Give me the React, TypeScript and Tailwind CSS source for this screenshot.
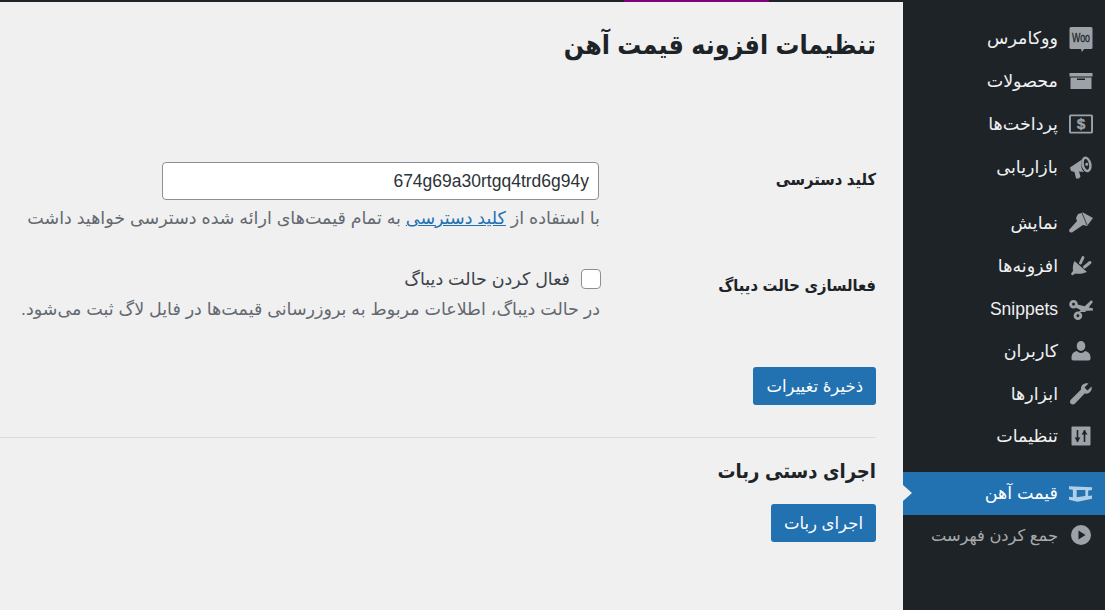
import React from "react";

const I = "#9ca2a7";
const D = "#1d2327";
const icons: Record<string, React.ReactNode> = {
  woo: (
    <svg width="24" height="26" viewBox="0 -2 24 26" className="overflow-visible">
      <path d="M2 0h20a1.500 1.500 0 0 1 1.500 1.500V20.500a1.500 1.500 0 0 1-1.500 1.500h-7l-2 3-1-3H2A1.500 1.500 0 0 1 .5 20.500V1.500A1.500 1.500 0 0 1 2 0z" fill={I} />
      <text x="12" y="15" textAnchor="middle" fontSize="12" fontFamily="Liberation Sans" fill={D} stroke={D} strokeWidth="0.3" textLength="18" lengthAdjust="spacingAndGlyphs">Woo</text>
    </svg>
  ),
  box: (
    <svg width="24" height="24" viewBox="0 0 24 24" fill={I}>
      <path d="M.5 4h23v3.500H.5zM1.500 8.500h21V20h-21z" />
      <rect x="8" y="9.500" width="8" height="1.500" fill={D} />
    </svg>
  ),
  pay: (
    <svg width="25" height="24" viewBox="0 0 25 24">
      <rect x="1" y="3" width="23" height="18" rx="1" fill="none" stroke={I} strokeWidth="2" />
      <text x="12.500" y="17.500" textAnchor="middle" fontSize="16" fontWeight="700" fontFamily="Liberation Sans" fill={I} stroke={I} strokeWidth="0.4">$</text>
    </svg>
  ),
  mega: (
    <svg width="24" height="24" viewBox="0 0 24 24" fill={I}>
      <path d="M1 12.500l12-8c-1.500 3-1 10 2 12.500l-5-.5 1.500 5-1.500 2h-3L5.500 17 2 16z" />
      <g transform="rotate(-12 17 9.500)">
        <ellipse cx="17.500" cy="9.500" rx="5" ry="8" fill={I} />
        <ellipse cx="17.500" cy="9.500" rx="2.500" ry="5.500" fill={D} />
        <circle cx="17.800" cy="9.500" r="1.500" fill={I} />
      </g>
    </svg>
  ),
  brush: (
    <svg width="24" height="24" viewBox="0 0 24 24" fill={I}>
      <path d="M9 3L14 1.500L24 7L18 15L14 14L3 21.500Q0 22 0 19L8 10L7 7z" />
      <path d="M13 2L18 14" stroke={D} strokeWidth="0.8" />
    </svg>
  ),
  plug: (
    <svg width="24" height="24" viewBox="0 0 24 24" fill={I}>
      <path d="M14 3.500L11.500 9M21 8.500L15.500 13" stroke={I} strokeWidth="3" strokeLinecap="round" />
      <path d="M5.500 7L18 18C13 20 9 20 6.500 19.500L3 21.500L2 19.500L4 17C3.500 13 4 10 5.500 7z" />
    </svg>
  ),
  scissors: (
    <svg width="25" height="24" viewBox="0 0 25 24" fill="none">
      <circle cx="4.700" cy="7" r="3" stroke={I} strokeWidth="3" />
      <circle cx="9.300" cy="19" r="3" stroke={I} strokeWidth="3" />
      <path d="M8 7L25 11.500V13.500L14 14L7 10.500zM10 15L23 3L25 4.500L17 15z" fill={I} />
    </svg>
  ),
  user: (
    <svg width="24" height="24" viewBox="0 0 24 24" fill={I}>
      <ellipse cx="12" cy="7" rx="4.300" ry="5" />
      <path d="M2.500 19.500c0-3.500.5-6 5.500-7.500 2 2.500 6 2.500 8 0 5 1.500 5.500 4 5.500 7.500 0 1-.5 2-2 2h-15c-1.500 0-2-1-2-2z" />
    </svg>
  ),
  wrench: (
    <svg width="24" height="24" viewBox="0 0 24 24" fill={I}>
      <path d="M22.500 4.500l-4 4-3-3 4-4c-3.500-1.200-8 1-7.500 6L2 17.500C.5 19 .8 20.700 1.800 21.700s3 1.300 4.300-.2l9.500-10c5 1 8-3.500 6.900-7z" />
    </svg>
  ),
  sliders: (
    <svg width="20" height="20" viewBox="0 0 20 20">
      <rect x="0.500" y="0.500" width="19" height="19" rx="1" fill={I} />
      <path d="M6.500 4v12M13.500 4v12" stroke={D} strokeWidth="1.600" />
      <path d="M3.500 11.500h6L6.500 16zM10.500 8.500h6L13.500 4z" fill={D} />
    </svg>
  ),
  beam: (
    <svg width="25" height="24" viewBox="0 0 25 24">
      <path d="M0 5L24 6V9L20 9.500V15L24 14.500V18L9 21L0 19V16L4 16.500V8.500L0 8z" fill="#b0cfe8" />
      <path d="M8 9H17V15L8 16.500z" fill="#2271b1" />
    </svg>
  ),
  play: (
    <svg width="20" height="20" viewBox="0 0 20 20">
      <circle cx="10" cy="10" r="10" fill={I} />
      <path d="M7.500 5.500l7 4.500-7 4.500z" fill={D} />
    </svg>
  ),
};

const Item = ({ icon, label, active, dim, h = "h-[42.6px]" }: { icon: string; label: string; active?: boolean; dim?: boolean; h?: string }) => (
  <div className={`relative flex items-center ${h} pr-[12px] ${active ? "bg-[#2271b1] text-white" : dim ? "text-[#a7aaad]" : "text-[#f0f0f1]"}`}>
    <span className="flex w-[24px] shrink-0 items-center justify-center">{icons[icon]}</span>
    <span className={`mr-[11px] leading-[20px] whitespace-nowrap ${dim ? "text-[16.300px]" : "text-[17.500px]"}`}>{label}</span>
    {active && <span className="absolute left-0 top-1/2 -translate-y-1/2 border-y-[8px] border-l-[9px] border-y-transparent border-l-[#f0f0f1]" />}
  </div>
);

export default function App() {
  return (
    <div dir="rtl" className="flex h-[610px] w-[1105px] overflow-hidden bg-[#f0f0f1] font-['Liberation_Sans','DejaVu_Sans',sans-serif] text-[#1d2327]">
      <aside className="w-[202px] shrink-0 bg-[#1d2327] pt-[16px]">
        <Item icon="woo" label="ووکامرس" h="h-[43px]" />
        <Item icon="box" label="محصولات" h="h-[43px]" />
        <Item icon="pay" label="پرداخت‌ها" h="h-[43px]" />
        <Item icon="mega" label="بازاریابی" h="h-[43px]" />
        <div className="h-[14.200px]" />
        <Item icon="brush" label="نمایش" />
        <Item icon="plug" label="افزونه‌ها" />
        <Item icon="scissors" label="Snippets" />
        <Item icon="user" label="کاربران" />
        <Item icon="wrench" label="ابزارها" />
        <Item icon="sliders" label="تنظیمات" />
        <div className="h-[14.200px]" />
        <Item icon="beam" label="قیمت آهن" active h="h-[43px]" />
        <Item icon="play" label="جمع کردن فهرست" dim h="h-[40px]" />
      </aside>
      <main className="relative min-w-0 flex-1 pr-[27px]">
        <div className="-mr-[27px] flex h-[2px] bg-[#1d2327]">
          <div className="mr-[134px] h-[2px] w-[145px] bg-[#800080]" />
        </div>
        <h1 className="mt-[27px] font-['Liberation_Sans','DejaVu_Sans_Condensed','DejaVu_Sans',sans-serif] text-[26.500px] font-bold leading-[32px]">تنظیمات افزونه قیمت آهن</h1>
        <div className="mt-[101px] flex">
          <label className="w-[276px] shrink-0 pt-[5px] font-['Liberation_Sans','DejaVu_Sans_Condensed','DejaVu_Sans',sans-serif] text-[16.400px] font-bold leading-[24px]">کلید دسترسی</label>
          <div>
            <input readOnly dir="ltr" value="674g69a30rtgq4trd6g94y" className="mr-[1px] block h-[38px] w-[437px] rounded-[4px] border border-[#8c8f94] bg-white px-[9px] text-right text-[17.500px] text-[#2c3338] outline-none" />
            <p className="mt-[6px] whitespace-nowrap text-[17.500px] leading-[24px] text-[#646970]">
              با استفاده از <a className="text-[#2271b1] underline">کلید دسترسی</a> به تمام قیمت‌های ارائه شده دسترسی خواهید داشت
            </p>
          </div>
        </div>
        <div className="mt-[37px] flex">
          <label className="w-[276px] shrink-0 pt-[6px] font-['Liberation_Sans','DejaVu_Sans_Condensed','DejaVu_Sans',sans-serif] text-[16.400px] font-bold leading-[24px]">فعالسازی حالت دیباگ</label>
          <div>
            <div className="flex items-center">
              <span className="-mr-[1px] h-[20px] w-[20px] rounded-[4px] border border-[#8c8f94] bg-white" />
              <span className="mr-[11px] text-[17.500px] leading-[24px] text-[#3c434a]">فعال کردن حالت دیباگ</span>
            </div>
            <p className="mt-[6px] whitespace-nowrap text-[17.500px] leading-[24px] text-[#646970]">
              در حالت دیباگ، اطلاعات مربوط به بروزرسانی قیمت‌ها در فایل لاگ ثبت می‌شود.
            </p>
          </div>
        </div>
        <button className="mt-[46px] block h-[38px] rounded-[3px] bg-[#2271b1] px-[13px] text-[16.500px] text-white">ذخیرهٔ تغییرات</button>
        <hr className="mt-[32px] border-t border-[#dcdcde]" />
        <h2 className="mt-[17px] font-['Liberation_Sans','DejaVu_Sans_Condensed','DejaVu_Sans',sans-serif] text-[20px] font-bold leading-[32px]">اجرای دستی ربات</h2>
        <button className="mt-[17px] block h-[38px] rounded-[3px] bg-[#2271b1] px-[13px] text-[16.500px] text-white">اجرای ربات</button>
      </main>
    </div>
  );
}
